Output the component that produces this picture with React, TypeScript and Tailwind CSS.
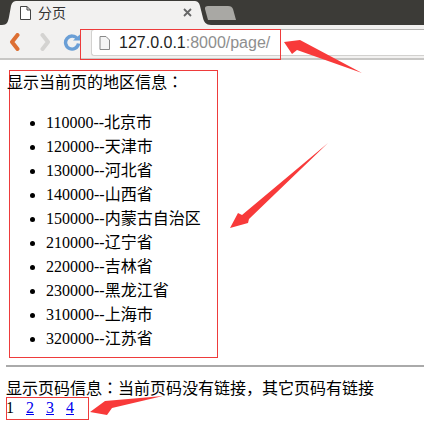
import React from "react";

const regions = ["110000--北京市","120000--天津市","130000--河北省","140000--山西省","150000--内蒙古自治区","210000--辽宁省","220000--吉林省","230000--黑龙江省","310000--上海市","320000--江苏省"];
const serif = "font-['Liberation_Serif','Noto_Sans_CJK_JP',serif]";

function Chrome() {
  return (
    <div className="font-['Liberation_Sans','Noto_Sans_CJK_SC',sans-serif]">
      <div className="h-[25px] bg-[#3c3b37] flex items-center relative overflow-hidden">
        <svg className="absolute left-0 top-0" width="240" height="25" viewBox="0 0 240 25">
          <path d="M2 25C7 25 8 22 9 17L11 6C12 2 14 1 17 1H194C197 1 199 2 200 6L203 18C204 22 206 25 211 25z" fill="#f2f1f0" />
          <path d="M208 20L205 9C204.500 7 206 6 208 6H228C231 6 232 7 233 9L236 20z" fill="#a9a8a4" />
        </svg>
        <div className="relative ml-[20px] w-[172px] flex items-center">
          <svg width="11" height="14" viewBox="0 0 11 14">
            <path d="M.5.5h6.500l3.500 3.500v9.500H.5z M7 .5V4h3.500" fill="#fff" stroke="#444" strokeWidth="1" />
          </svg>
          <span className="text-[14px] leading-none text-[#333] ml-[7px] flex-1">分页</span>
          <svg width="9" height="9" viewBox="0 0 9 9"><path d="M1 1l7 7M8 1l-7 7" stroke="#666" strokeWidth="1.8" /></svg>
        </div>
      </div>
      <div className="h-[35px] bg-[#f2f1f0] border-b-2 border-[#c8c7c5] flex items-start pt-[4px] pl-[9px] box-border">
        <svg width="11" height="18" viewBox="0 0 11 18" className="mt-[4px]"><path d="M8.500 2L3 9l5.500 7" fill="none" stroke="#dd6f33" strokeWidth="4" strokeLinejoin="round" strokeLinecap="round" /></svg>
        <svg width="11" height="18" viewBox="0 0 11 18" className="mt-[4px] ml-[20px]"><path d="M2.500 2L8 9l-5.500 7" fill="none" stroke="#d4d3d1" strokeWidth="4" strokeLinejoin="round" strokeLinecap="round" /></svg>
        <svg width="18" height="18" viewBox="0 0 18 18" className="mt-[4px] ml-[12px]"><path d="M14.500 6A6.500 6.500 0 1 0 15.500 10.500" fill="none" stroke="#6b9fd6" strokeWidth="3.400" /><path d="M10 7.500h7.500V1z" fill="#6b9fd6" /></svg>
        <div className="ml-[10px] flex-1 h-[27px] bg-white border border-r-0 border-[#d2d1cf] border-t-[#b5b4b2] rounded-l-[3px] flex items-center pl-[7px]">
          <svg width="11" height="14" viewBox="0 0 11 14"><path d="M1 .5h6l3.500 3.500v9.500H1z" fill="#f4f4f4" stroke="#888" /></svg>
          <span className="ml-[9px] text-[16px] leading-none text-[#222]">127.0.0.1<span className="text-[#8e8e8e]">:8000/page/</span></span>
        </div>
      </div>
    </div>
  );
}

export default function App() {
  return (
    <div className="relative w-[424px] h-[430px] overflow-hidden bg-white">
      <Chrome />
      <div className={`${serif} text-[16px] text-black`}>
        <div className="ml-[9px] mt-[10px] w-[209px] h-[288px] border border-[#ee3b3b] box-border">
          <p className="-ml-[3px] pt-[2px] leading-[20px]">显示当前页的地区信息：</p>
          <ul className="list-disc mt-[20px] pl-[36px]">
            {regions.map((r) => (
              <li key={r} className="h-[24px] leading-[20px]">{r}</li>
            ))}
          </ul>
        </div>
        <div className="ml-[6px] mt-[7px] h-[2px] bg-[#aaa]" />
        <p className="ml-[6px] mt-[12px] leading-[20px]">显示页码信息：当前页码没有链接，其它页码有链接</p>
        <div className="ml-[6px] leading-[18px] flex gap-[12px]">
          <span>1</span>
          <a href="#" className="text-[#0000ee] underline">2</a>
          <a href="#" className="text-[#0000ee] underline">3</a>
          <a href="#" className="text-[#0000ee] underline">4</a>
        </div>
      </div>
      <div className="absolute left-[80px] top-[29px] w-[201px] h-[31px] border border-[#ee3b3b]" />
      <div className="absolute left-[6px] top-[397px] w-[83px] h-[23px] border border-[#ee3b3b]" />
      <svg className="absolute left-0 top-0 pointer-events-none" width="424" height="430" viewBox="0 0 424 430">
        <path d="M284 42L300 40L362 73L297 50L292 54z" fill="#f83a3a" />
        <path d="M230 228L238 213L242 215L328 143L249 219L248 223z" fill="#f83a3a" />
        <path d="M90 412L105 401L163 396L112 408L107 415z" fill="#f83a3a" />
      </svg>
    </div>
  );
}
